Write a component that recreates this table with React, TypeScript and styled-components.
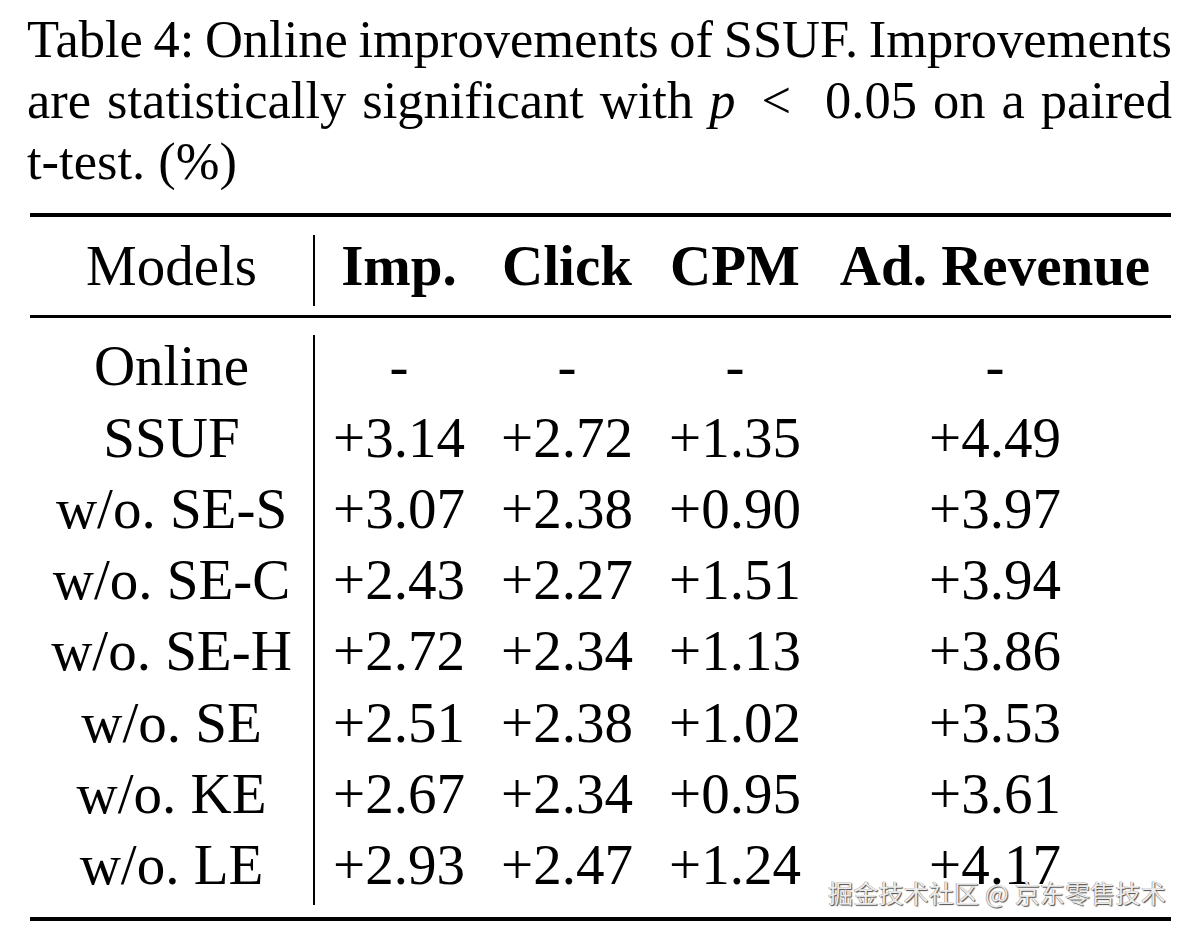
import React from "react";
import styled, { createGlobalStyle } from "styled-components";

const GlobalStyle = createGlobalStyle`
  html, body {
    margin: 0;
    padding: 0;
    background: #ffffff;
  }
  body {
    font-family: "Liberation Serif", "Times New Roman", serif;
    color: #000000;
  }
`;

const Page = styled.div`
  position: relative;
  width: 1188px;
  height: 934px;
  box-sizing: border-box;
  padding: 9px 16px 0 27px;
  overflow: hidden;
`;

const Caption = styled.div`
  font-size: 52.5px;
  line-height: 61px;
`;

const CaptionLine = styled.div<{ $fill?: boolean; $tight?: boolean }>`
  text-align: ${(p) => (p.$fill ? "justify" : "left")};
  text-align-last: ${(p) => (p.$fill ? "justify" : "left")};
  word-spacing: ${(p) => (p.$tight ? "-5px" : "0")};
`;

const MathVar = styled.i`
  font-style: italic;
`;

const MathRel = styled.span`
  margin: 0 34px 0 26px;
`;

const Table = styled.div`
  margin: 21px 0 0 3px;
  width: 1141px;
  font-size: 57px;
`;

const Rule = styled.div<{ $h: number; $before: number; $after: number }>`
  height: ${(p) => p.$h}px;
  background: #000000;
  margin-top: ${(p) => p.$before}px;
  margin-bottom: ${(p) => p.$after}px;
`;

const Row = styled.div`
  display: grid;
  grid-template-columns: 285px 168px 168px 168px 352px;
`;

const Cell = styled.div<{ $bold?: boolean; $divider?: boolean }>`
  box-sizing: border-box;
  text-align: center;
  white-space: nowrap;
  line-height: 61.75px;
  padding-bottom: 9.5px;
  font-weight: ${(p) => (p.$bold ? 700 : 400)};
  border-right: ${(p) => (p.$divider ? "2px solid #000000" : "none")};
`;

const Watermark = styled.div`
  position: absolute;
  left: 828px;
  top: 880px;
  font-family: "Noto Sans CJK SC", "Noto Sans", sans-serif;
  font-size: 25px;
  line-height: 25px;
  letter-spacing: 0.2px;
  color: #ececec;
  text-shadow: 1px 1px 1px #4a4a4a, -0.5px -0.5px 0.5px #8a8a8a;
  white-space: nowrap;
`;

const headers = ["Imp.", "Click", "CPM", "Ad. Revenue"];

const rows: [string, string, string, string, string][] = [
  ["Online", "-", "-", "-", "-"],
  ["SSUF", "+3.14", "+2.72", "+1.35", "+4.49"],
  ["w/o. SE-S", "+3.07", "+2.38", "+0.90", "+3.97"],
  ["w/o. SE-C", "+2.43", "+2.27", "+1.51", "+3.94"],
  ["w/o. SE-H", "+2.72", "+2.34", "+1.13", "+3.86"],
  ["w/o. SE", "+2.51", "+2.38", "+1.02", "+3.53"],
  ["w/o. KE", "+2.67", "+2.34", "+0.95", "+3.61"],
  ["w/o. LE", "+2.93", "+2.47", "+1.24", "+4.17"],
];

export default function App() {
  return (
    <>
      <GlobalStyle />
      <Page>
        <Caption>
          <CaptionLine $fill $tight>
            Table 4: Online improvements of SSUF. Improvements
          </CaptionLine>
          <CaptionLine $fill>
            are statistically significant with <MathVar>p</MathVar>
            <MathRel>&lt;</MathRel>0.05 on a paired
          </CaptionLine>
          <CaptionLine>t-test. (%)</CaptionLine>
        </Caption>
        <Table>
          <Rule $h={4} $before={0} $after={18} />
          <Row>
            <Cell $divider>Models</Cell>
            {headers.map((h) => (
              <Cell key={h} $bold>
                {h}
              </Cell>
            ))}
          </Row>
          <Rule $h={3} $before={9} $after={17} />
          {rows.map((r) => (
            <Row key={r[0]}>
              <Cell $divider>{r[0]}</Cell>
              {r.slice(1).map((v, i) => (
                <Cell key={i}>{v}</Cell>
              ))}
            </Row>
          ))}
          <Rule $h={4} $before={12} $after={0} />
        </Table>
        <Watermark>掘金技术社区 @ 京东零售技术</Watermark>
      </Page>
    </>
  );
}
